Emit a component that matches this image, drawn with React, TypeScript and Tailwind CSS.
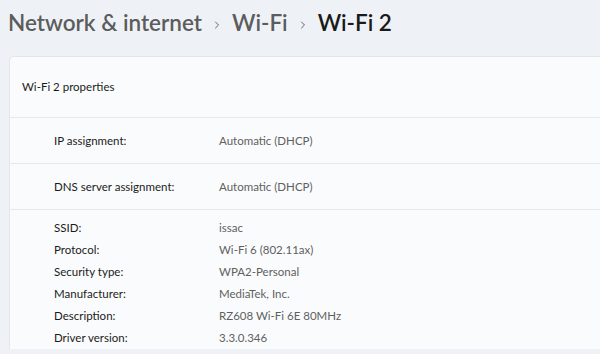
const basics = [
  { label: "IP assignment:", value: "Automatic (DHCP)" },
  { label: "DNS server assignment:", value: "Automatic (DHCP)" },
];

const details = [
  { label: "SSID:", value: "issac" },
  { label: "Protocol:", value: "Wi-Fi 6 (802.11ax)" },
  { label: "Security type:", value: "WPA2-Personal" },
  { label: "Manufacturer:", value: "MediaTek, Inc." },
  { label: "Description:", value: "RZ608 Wi-Fi 6E 80MHz" },
  { label: "Driver version:", value: "3.3.0.346" },
];

function Chevron() {
  return (
    <svg width="6" height="10" viewBox="0 0 6 10" className="mt-[2px] shrink-0">
      <path d="M1.5 2 L4.5 5 L1.5 8" fill="none" stroke="#666" strokeWidth="1" strokeLinecap="round" strokeLinejoin="round" />
    </svg>
  );
}

export default function App() {
  return (
    <div
      className="h-[354px] w-[600px] overflow-hidden bg-[#eef2f7]"
      style={{ fontFamily: 'Lato, "Open Sans", sans-serif' }}
    >
      {/* BREADCRUMB */}
      <div className="flex h-[56px] items-center gap-[12px] pl-[8px] pb-[9px] text-[22.5px] font-semibold leading-none">
        <span className="text-[#5c5c5c]">Network &amp; internet</span>
        <Chevron />
        <span className="text-[#5c5c5c]">Wi-Fi</span>
        <Chevron />
        <span className="text-[#1a1a1a]">Wi-Fi 2</span>
      </div>

      {/* PROPERTIES CARD */}
      <div className="ml-[9px] rounded-tl-[5px] border-l border-t border-[#e3e5e8] bg-[#fafbfc] text-[11.5px]">
        <div className="flex h-[61px] items-center border-b border-[#e6e8eb] pl-[12px] text-[#1b1b1b]">
          Wi-Fi 2 properties
        </div>

        {basics.map((row) => (
          <div
            key={row.label}
            className="flex h-[46px] items-center border-b border-[#e6e8eb] pl-[44px]"
          >
            <span className="w-[165px] text-[#1b1b1b]">{row.label}</span>
            <span className="text-[#5f5f5f]">{row.value}</span>
          </div>
        ))}

        <div className="flex flex-col pt-[7px] pl-[44px]">
          {details.map((row) => (
            <div key={row.label} className="flex h-[22px] items-center">
              <span className="w-[165px] text-[#1b1b1b]">{row.label}</span>
              <span className="text-[#5f5f5f]">{row.value}</span>
            </div>
          ))}
        </div>
      </div>
    </div>
  );
}
